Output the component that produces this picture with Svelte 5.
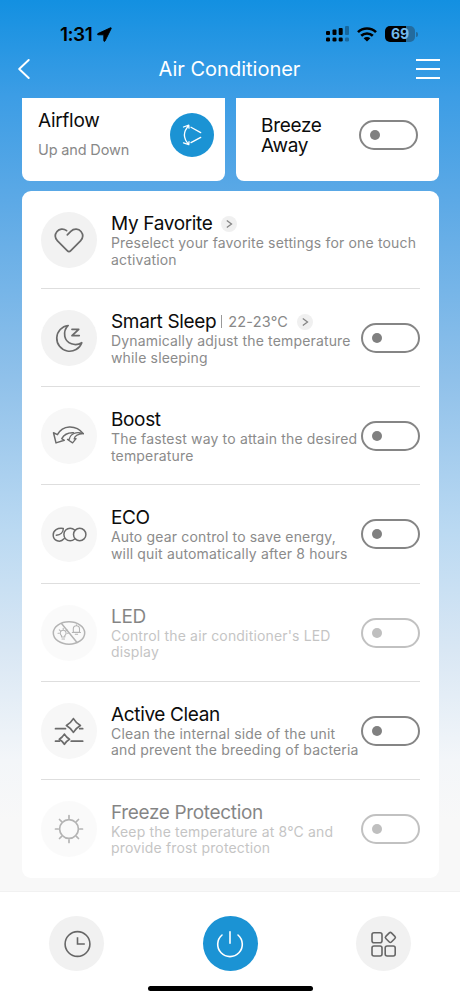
<script lang="ts">
  type Feature = {
    icon: string;
    title: string;
    lines: string[];
    range?: string;
    link?: boolean;
    toggle?: boolean;
    disabled?: boolean;
    faint?: boolean;
  };

  const features: Feature[] = [
    {
      icon: 'heart',
      title: 'My Favorite',
      lines: ['Preselect your favorite settings for one touch', 'activation'],
      link: true,
    },
    {
      icon: 'sleep',
      title: 'Smart Sleep',
      lines: ['Dynamically adjust the temperature', 'while sleeping'],
      range: '22-23°C',
      link: true,
      toggle: true,
    },
    {
      icon: 'boost',
      title: 'Boost',
      lines: ['The fastest way to attain the desired', 'temperature'],
      toggle: true,
      faint: true,
    },
    {
      icon: 'eco',
      title: 'ECO',
      lines: ['Auto gear control to save energy,', 'will quit automatically after 8 hours'],
      toggle: true,
      faint: true,
    },
    {
      icon: 'led',
      title: 'LED',
      lines: ["Control the air conditioner's LED", 'display'],
      toggle: true,
      disabled: true,
    },
    {
      icon: 'clean',
      title: 'Active Clean',
      lines: ['Clean the internal side of the unit', 'and prevent the breeding of bacteria'],
      toggle: true,
      faint: true,
    },
    {
      icon: 'freeze',
      title: 'Freeze Protection',
      lines: ['Keep the temperature at 8°C and', 'provide frost protection'],
      toggle: true,
      disabled: true,
    },
  ];

  let breezeOn = $state(false);
  let enabled = $state<Record<string, boolean>>({});

  function flip(feature: Feature) {
    if (feature.disabled) return;
    enabled[feature.icon] = !enabled[feature.icon];
  }
</script>

<div class="screen">
  <div class="status">
    <div class="clock">
      <span>1:31</span>
      <svg width="15" height="15" viewBox="0 0 15 15">
        <path d="M13.500.8.9 6.600c-.7.4-.5 1.200.2 1.200h5.700v5.900c0 .8.800 1 1.200.3L14.200 1.500c.2-.6-.2-.9-.7-.7z" stroke="#000" stroke-width=".9" />
      </svg>
    </div>
    <div class="signals">
      <svg width="23" height="16" viewBox="0 0 23 16">
        <rect x="0" y="5" width="4" height="4" rx="1" />
        <rect x="6.500" y="3.500" width="4" height="5.500" rx="1" />
        <rect x="12.700" y="2" width="4" height="7" rx="1" />
        <rect x="19" y="0" width="4" height="9" rx="1" opacity=".3" />
        <rect x="0" y="11.500" width="4" height="4" rx="1.300" />
        <rect x="6.500" y="11.500" width="4" height="4" rx="1.300" />
        <rect x="12.700" y="11.500" width="4" height="4" rx="1.300" />
        <rect x="19" y="11.500" width="4" height="4" rx="1.300" opacity=".3" />
      </svg>
      <svg width="20" height="15" viewBox="0 0 20 15">
        <g fill="none" stroke="#000" stroke-width="2.600">
          <path d="M1 5.200a12.800 12.800 0 0 1 18 0" />
          <path d="M4.200 8.800a8.300 8.300 0 0 1 11.600 0" />
        </g>
        <path d="M10 14.600 6.600 11.300a4.900 4.900 0 0 1 6.800 0z" />
      </svg>
      <div class="battery"><span>69</span></div>
      <i class="battery-tip"></i>
    </div>
  </div>

  <header>
    <button class="plain" aria-label="Back">
      <svg width="12" height="20" viewBox="0 0 12 20" fill="none" stroke="#fff" stroke-width="1.900" stroke-linecap="round" stroke-linejoin="round">
        <path d="M10.700 1 1.200 10l9.500 9" />
      </svg>
    </button>
    <h1>Air Conditioner</h1>
    <button class="plain" aria-label="Menu">
      <svg width="24" height="22" viewBox="0 0 24 22" stroke="#fff" stroke-width="2">
        <path d="M0 2h24M0 11h24M0 20h24" />
      </svg>
    </button>
  </header>

  <main>
    <div class="cards">
      <section class="card airflow">
        <div>
          <h2>Airflow</h2>
          <p>Up and Down</p>
        </div>
        <button class="round blue" aria-label="Airflow direction">
          <svg width="44" height="44" viewBox="0 0 44 44" fill="none" stroke="#fff" stroke-width="1.300" stroke-linecap="round" stroke-linejoin="round">
            <path d="M18.800 12.500Q10 22 18.800 31.500M13.500 14l5.300-1.800.2 3M13.500 29.800l5.300 1.900.2-3M21 14.300l9.700 5.300M21 29.600l9.700-5.200" />
          </svg>
        </button>
      </section>
      <section class="card breeze">
        <h2><span>Breeze</span><span>Away</span></h2>
        <button class="toggle" class:on={breezeOn} aria-label="Breeze Away" onclick={() => (breezeOn = !breezeOn)}></button>
      </section>
    </div>

    <section class="panel">
      {#each features as feature}
        <div class="row" class:disabled={feature.disabled}>
          <div class="icon" class:faint={feature.faint}>
            <svg width="56" height="56" viewBox="0 0 56 56" fill="none" stroke="#6b6b6b" stroke-width="1.700" stroke-linecap="round" stroke-linejoin="round">
              {#if feature.icon === 'heart'}
                <path d="M26.300 22.800l3.500-3.500c3.300-3.100 7.900-2.600 10.200.2 2.300 2.900 2.100 6.600-.5 9.300l-9.700 9.900c-1.200 1.200-2.400 1.200-3.600 0l-9.700-9.900c-2.600-2.700-2.800-6.400-.5-9.300 2.200-2.700 6.400-3.300 9.600-.8" />
              {:else if feature.icon === 'sleep'}
                <path d="M27.200 15.500a12.900 12.900 0 1 0 13.600 17.200c-6.500 4-15.500 1-17-6.300-.8-4.300.6-8.200 3.400-10.900z" />
                <path d="M31 19.300h6.700l-6.700 6.300h7.200" stroke-width="1.800" />
              {:else if feature.icon === 'boost'}
                <g stroke-width="1.500">
                  <path d="M42.300 25.600c-3.800-4.800-9-6.900-14-6.700-5.300.3-9.500 3.300-11.900 7.700l-3.900-1.800L15 34.900l8.300-2.600-2.500-1.600c2-3.700 6.500-6.200 11.700-5.900" />
                  <path d="M42.300 25.600c-7.300-2.300-13 .1-14 5.700l-1.800.2 5.100 3.400 3.500-4.200-1.900.2c.4-2.700 3.800-5 9.100-5.300z" stroke-width="1.300" />
                </g>
              {:else if feature.icon === 'eco'}
                <g stroke-width="1.500">
                  <path d="M15.300 29.200c4-.2 7.100-2.800 7-6.700-5.800-.9-10.100 1.900-10.100 6.500 0 6 7 8.100 10.800 3.800M33.600 24a6.300 6.300 0 1 0 0 9" />
                  <circle cx="38.700" cy="28.500" r="6.200" />
                </g>
              {:else if feature.icon === 'led'}
                <g stroke-width="1.500">
                  <ellipse cx="28" cy="28" rx="15.700" ry="11.200" />
                  <path d="M20.500 18.500l15.500 19" />
                </g>
                <g stroke-width="1.100">
                  <path d="M20.500 32v-1.500a2.900 2.900 0 1 1 3.300 0V32zM21 34h2.500M22.200 23.300v1.300M17 28.300h1.100M26.300 28.300h1M18.300 24.900l.9.800M26 24.900l-.9.800M32.300 27.300v-3.500a3.100 3.100 0 0 1 6.200 0v3.500zM31.300 27.500h8.200M34.300 29.300h2.300M35.400 19.800v.8" />
                </g>
              {:else if feature.icon === 'clean'}
                <path d="M14.500 25.700h10M38.700 25.700h3M14.500 38.200h4M30.200 38.200h11.500" />
                <path d="M32.400 15.600q2.600 4.300 7 6.900-4.400 2.600-7 6.900-2.600-4.300-7-6.900 4.400-2.600 7-6.900zM23.400 31.100q1.900 3.200 5.100 5.100-3.200 1.900-5.100 5.100-1.900-3.200-5.100-5.100 3.200-1.900 5.100-5.100z" />
              {:else}
                <circle cx="28" cy="28" r="9.400" />
                <path d="M28 14.500v2.700M28 38.800v2.700M14.500 28h2.700M38.800 28h2.700M18.500 18.500l1.900 1.900M35.600 35.600l1.900 1.900M18.500 37.500l1.900-1.900M35.600 20.400l1.900-1.900" />
              {/if}
            </svg>
          </div>
          <div class="text">
            <div class="heading">
              <h3>{feature.title}</h3>
              {#if feature.range}
                <i class="bar"></i>
                <span class="range">{feature.range}</span>
              {/if}
              {#if feature.link}
                <span class="more">
                  <svg width="16" height="16" viewBox="0 0 16 16" fill="none" stroke="#858585" stroke-width="1.300">
                    <path d="M5.800 4.500 10.500 8l-4.700 3.500" />
                  </svg>
                </span>
              {/if}
            </div>
            {#each feature.lines as line}
              <p>{line}</p>
            {/each}
          </div>
          {#if feature.toggle}
            <button
              class="toggle"
              class:on={enabled[feature.icon]}
              disabled={feature.disabled}
              aria-label={feature.title}
              onclick={() => flip(feature)}
            ></button>
          {/if}
        </div>
      {/each}
    </section>
  </main>

  <footer>
    <nav>
      <button class="round" aria-label="Schedule">
        <svg width="28" height="28" viewBox="0 0 28 28" fill="none" stroke="#666" stroke-width="1.600">
          <circle cx="14.500" cy="14" r="12.400" />
          <path d="M14.500 7.200V14h7.300" />
        </svg>
      </button>
      <button class="round blue" aria-label="Power">
        <svg width="28" height="28" viewBox="0 0 28 28" fill="none" stroke="#fff" stroke-width="1.600" stroke-linecap="round">
          <path d="M6 5a12.300 12.300 0 1 0 16 0M14 1.700v11.500" />
        </svg>
      </button>
      <button class="round" aria-label="More functions">
        <svg width="28" height="28" viewBox="0 0 28 28" fill="none" stroke="#666" stroke-width="1.600" stroke-linejoin="round">
          <rect x="2" y="2.700" width="10" height="10" rx="2" />
          <rect x="2" y="16" width="10" height="10" rx="2" />
          <rect x="15.200" y="16" width="10" height="10" rx="2" />
          <rect x="16.400" y="3.500" width="7.900" height="7.900" rx="1.500" transform="rotate(45 20.350 7.450)" />
        </svg>
      </button>
    </nav>
    <div class="home"></div>
  </footer>
</div>

<style>
  :global(body) {
    margin: 0;
  }

  .screen {
    display: flex;
    flex-direction: column;
    width: 460px;
    height: 1000px;
    overflow: hidden;
    box-sizing: border-box;
    font-family: Inter, 'Liberation Sans', sans-serif;
    color: #0c0c0c;
    background: linear-gradient(
      #1390e1 0,
      #3c9de5 95px,
      #5ca9e6 200px,
      #90c1ea 380px,
      #bad9f2 530px,
      #d9e7f4 650px,
      #f3f6f9 760px,
      #f8f8f8 820px
    );
  }

  h1, h2, h3, p {
    margin: 0;
    font-weight: 400;
  }

  svg {
    display: block;
  }

  button {
    padding: 0;
    border: 0;
    background: none;
    cursor: pointer;
  }

  .status {
    display: flex;
    justify-content: space-between;
    align-items: center;
    height: 22px;
    padding: 23px 42px 0 60px;
  }

  .clock {
    display: flex;
    align-items: center;
    gap: 5px;
    color: #000;
    font-size: 19px;
    font-weight: 600;
    letter-spacing: -0.5px;
  }

  .signals {
    display: flex;
    align-items: center;
  }

  .signals svg + svg {
    margin-left: 8px;
  }

  .battery {
    width: 30px;
    height: 16px;
    margin-left: 8px;
    border-radius: 5px;
    background: linear-gradient(90deg, #000 69%, #236b9e 69%);
    color: #71b9ed;
    font-size: 14px;
    font-weight: 700;
    line-height: 16px;
    text-align: center;
  }

  .battery-tip {
    width: 2px;
    height: 5px;
    margin-left: 1px;
    border-radius: 0 2px 2px 0;
    background: #236b9e;
  }

  header {
    display: flex;
    align-items: center;
    justify-content: space-between;
    height: 48px;
    padding: 0 20px 5px 18px;
  }

  h1 {
    margin-left: 13px;
    color: #fff;
    font-size: 20px;
    line-height: 24px;
  }

  main {
    display: flex;
    flex-direction: column;
    gap: 10px;
    flex: 1;
    padding: 0 21px 0 22px;
  }

  .cards {
    display: flex;
    justify-content: space-between;
  }

  .card {
    display: flex;
    justify-content: space-between;
    align-items: flex-start;
    width: 203px;
    height: 83px;
    border-radius: 0 0 8px 8px;
    box-sizing: border-box;
    background: #fff;
  }

  h2 {
    font-size: 19px;
    line-height: 20px;
    letter-spacing: -0.3px;
  }

  h2 span {
    display: block;
  }

  .airflow {
    padding: 13px 11px 0 16px;
  }

  .airflow p {
    margin-top: 10px;
    color: #888;
    font-size: 14.5px;
    line-height: 18px;
    letter-spacing: -0.15px;
  }

  .airflow .round {
    width: 44px;
    height: 44px;
    margin-top: 2px;
  }

  .breeze {
    padding: 18px 21px 0 25px;
  }

  .breeze .toggle {
    margin-top: 4px;
  }

  .panel {
    height: 687px;
    padding: 0 19px;
    border-radius: 9px;
    background: #fff;
    box-sizing: border-box;
  }

  .row {
    display: flex;
    align-items: center;
    box-sizing: border-box;
    height: 98.15px;
    padding-top: 1px;
    border-bottom: 1px solid #dedede;
  }

  .row:last-child {
    border-bottom-color: transparent;
  }

  .icon {
    flex: none;
    width: 56px;
    height: 56px;
    margin-right: 14px;
    border-radius: 50%;
    background: #f2f2f2;
  }

  .icon.faint {
    background: #f7f7f7;
  }

  .text {
    flex: 1;
    min-width: 0;
  }

  .heading {
    display: flex;
    align-items: center;
    height: 23px;
  }

  h3 {
    font-size: 19px;
    letter-spacing: -0.35px;
    white-space: nowrap;
  }

  .bar {
    width: 1px;
    height: 13px;
    margin: 0 6px 0 5px;
    background: #999;
  }

  .range {
    color: #888;
    font-size: 14.5px;
    letter-spacing: 0.2px;
  }

  .more {
    margin-left: 9px;
    border-radius: 50%;
    background: #f0f0f0;
  }

  .text p {
    color: #8b8b8b;
    font-size: 14px;
    line-height: 16.5px;
    letter-spacing: 0.16px;
    white-space: nowrap;
  }

  .toggle {
    position: relative;
    flex: none;
    width: 59px;
    height: 30px;
    border: 2px solid #858585;
    border-radius: 15px;
    box-sizing: border-box;
  }

  .toggle::before {
    content: '';
    position: absolute;
    top: 8px;
    left: 9px;
    width: 10px;
    height: 10px;
    border-radius: 50%;
    background: #808080;
  }

  .toggle.on::before {
    left: 36px;
  }

  .disabled .icon,
  .disabled .text,
  .disabled .toggle {
    opacity: 0.5;
  }

  .disabled .icon {
    background: #f7f7f7;
  }

  footer {
    display: flex;
    flex-direction: column;
    align-items: center;
    justify-content: space-between;
    box-sizing: border-box;
    height: 109px;
    padding: 24px 49px 9px;
    border-top: 1px solid #f1f1f1;
    background: #fff;
  }

  nav {
    display: flex;
    justify-content: space-between;
    width: 100%;
  }

  .round {
    display: flex;
    align-items: center;
    justify-content: center;
    width: 55px;
    height: 55px;
    border-radius: 50%;
    background: #f1f1f1;
  }

  .round.blue {
    background: #1b93d4;
  }

  .home {
    width: 165px;
    height: 5px;
    border-radius: 3px;
    background: #000;
  }
</style>
